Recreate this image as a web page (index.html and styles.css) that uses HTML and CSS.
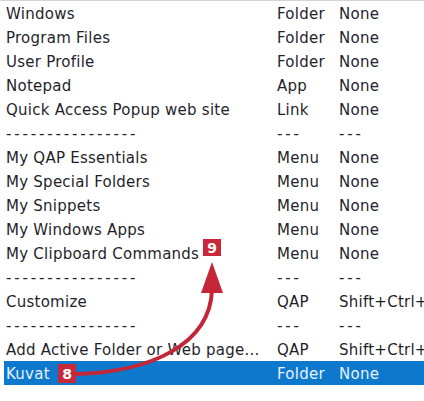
FILE: index.html
```html
<!DOCTYPE html>
<html>
<head>
<meta charset="utf-8">
<link rel="stylesheet" href="styles.css">
</head>
<body>
<div class="view">
  <div class="list">
    <div class="row"><span class="name">Windows</span><span class="type">Folder</span><span class="key">None</span></div>
    <div class="row"><span class="name">Program Files</span><span class="type">Folder</span><span class="key">None</span></div>
    <div class="row"><span class="name">User Profile</span><span class="type">Folder</span><span class="key">None</span></div>
    <div class="row"><span class="name">Notepad</span><span class="type">App</span><span class="key">None</span></div>
    <div class="row"><span class="name">Quick Access Popup web site</span><span class="type">Link</span><span class="key">None</span></div>
    <div class="row"><span class="name dash">----------------</span><span class="type dash">---</span><span class="key dash">---</span></div>
    <div class="row"><span class="name">My QAP Essentials</span><span class="type">Menu</span><span class="key">None</span></div>
    <div class="row"><span class="name">My Special Folders</span><span class="type">Menu</span><span class="key">None</span></div>
    <div class="row"><span class="name">My Snippets</span><span class="type">Menu</span><span class="key">None</span></div>
    <div class="row"><span class="name">My Windows Apps</span><span class="type">Menu</span><span class="key">None</span></div>
    <div class="row"><span class="name">My Clipboard Commands</span><span class="type">Menu</span><span class="key">None</span></div>
    <div class="row"><span class="name dash">----------------</span><span class="type dash">---</span><span class="key dash">---</span></div>
    <div class="row"><span class="name">Customize</span><span class="type">QAP</span><span class="key">Shift+Ctrl+</span></div>
    <div class="row"><span class="name dash">----------------</span><span class="type dash">---</span><span class="key dash">---</span></div>
    <div class="row"><span class="name">Add Active Folder or Web page...</span><span class="type">QAP</span><span class="key">Shift+Ctrl+</span></div>
    <div class="row selected"><span class="name">Kuvat</span><span class="type">Folder</span><span class="key">None</span></div>
  </div>
  <svg class="arrow" width="424" height="401" viewBox="0 0 424 401">
    <path d="M 76 374 C 150 372, 210 345, 212 290" fill="none" stroke="#c42638" stroke-width="4" stroke-linecap="round"/>
    <polygon points="212,262 201,293 223,293" fill="#c42638"/>
  </svg>
  <span class="badge badge-9">9</span>
  <span class="badge badge-8">8</span>
</div>
</body>
</html>
```
FILE: styles.css
```css
html, body {
  margin: 0;
  padding: 0;
  background: #ffffff;
}
.view {
  position: relative;
  width: 424px;
  height: 401px;
  overflow: hidden;
  font-family: "DejaVu Sans", Verdana, sans-serif;
  font-size: 15px;
  letter-spacing: 0.25px;
  color: #1f1f2c;
}
.list {
  border-top: 1px solid #d4d4d4;
  padding-left: 4px;
}
.row {
  display: grid;
  grid-template-columns: 273px 62px 1fr;
  height: 24px;
  padding-top: 2px;
  box-sizing: border-box;
  align-items: center;
  white-space: nowrap;
  overflow: hidden;
}
.name {
  padding-left: 2px;
  overflow: hidden;
}
.dash {
  letter-spacing: 2.85px;
}
.selected {
  background: #0e78cd;
  color: #e4f2ff;
}
.arrow {
  position: absolute;
  left: 0;
  top: 0;
}
.badge {
  position: absolute;
  background: #c8283a;
  color: #ffffff;
  font-weight: bold;
  font-size: 14px;
  letter-spacing: 0;
  display: flex;
  align-items: center;
  justify-content: center;
}
.badge-9 {
  left: 203px;
  top: 239px;
  width: 18px;
  height: 17px;
}
.badge-8 {
  left: 58px;
  top: 364px;
  width: 18px;
  height: 19px;
}
```
